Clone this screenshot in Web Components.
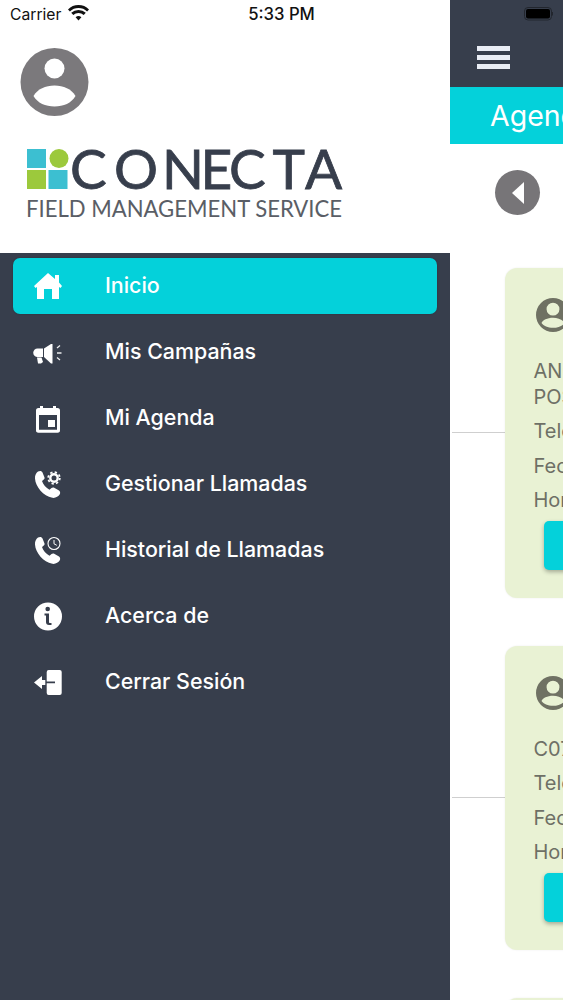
<!DOCTYPE html>
<html><head><meta charset="utf-8"><style>
html,body{margin:0;padding:0;background:#fff}
body{width:563px;height:1000px;overflow:hidden;font-family:Inter,"Liberation Sans",sans-serif}
</style></head><body>
<app-shell>
<side-drawer>
  <nav-item label="Inicio" icon="home" active></nav-item>
  <nav-item label="Mis Campañas" icon="mega"></nav-item>
  <nav-item label="Mi Agenda" icon="cal"></nav-item>
  <nav-item label="Gestionar Llamadas" icon="gear"></nav-item>
  <nav-item label="Historial de Llamadas" icon="clock"></nav-item>
  <nav-item label="Acerca de" icon="info"></nav-item>
  <nav-item label="Cerrar Sesión" icon="exit"></nav-item>
</side-drawer>
<agenda-panel>
  <agenda-card h="330"><span>ANGELICA MARIA<br>POSADA</span><span>Teléfono</span><span>Fecha</span><span>Hora</span></agenda-card>
  <agenda-card h="304" gap="48"><span>C0752</span><span>Teléfono</span><span>Fecha</span><span>Hora</span></agenda-card>
  <agenda-card h="304" gap="48"><span>C0752</span><span>Teléfono</span><span>Fecha</span><span>Hora</span></agenda-card>
</agenda-panel>
<status-bar></status-bar>
</app-shell>
<script>
const def=(n,html)=>{customElements.define(n,class extends HTMLElement{connectedCallback(){if(this.shadowRoot)return;const s=this.attachShadow({mode:'open'});s.innerHTML=typeof html==='function'?html(this):html;}})};

def('app-shell',`<style>:host{display:flex;width:563px;height:1000px;position:relative;overflow:hidden}</style><slot></slot>`);

def('status-bar',`<style>
:host{position:absolute;left:0;top:0;width:563px;height:30px;display:block;font:500 15px/29px Inter,sans-serif;color:#111}
.c{position:absolute;left:10px;top:0;font-weight:400;font-size:15.700px}
.t{position:absolute;left:0;right:0;top:0;text-align:center;font-size:16.700px;font-weight:500}
svg{position:absolute}
</style>
<span class="c">Carrier</span>
<svg style="left:68px;top:5px" width="21" height="16" viewBox="0 0 21 16"><path d="M10.5 15.5 7.6 12.3a4.2 4.2 0 0 1 5.8 0zM5.3 10 3.2 7.8a10.6 10.6 0 0 1 14.6 0L15.7 10a7.6 7.6 0 0 0-10.4 0zM1.9 6.4 0 4.4a15 15 0 0 1 21 0l-1.9 2a12.4 12.4 0 0 0-17.2 0z" fill="#111"/></svg>
<span class="t">5:33 PM</span>
<svg style="left:524px;top:7px" width="29" height="14" viewBox="0 0 29 14"><rect x=".5" y=".5" width="27" height="12.5" rx="3.5" fill="none" stroke="#22262e"/><rect x="2" y="2" width="24" height="9.5" rx="2" fill="#000"/><rect x="28" y="5" width="1" height="3.5" fill="#22262e"/></svg>`);

def('side-drawer',`<style>
:host{display:flex;flex-direction:column;width:450px;flex:none;height:1000px;background:#373e4c}
.head{height:253px;background:#fff;box-sizing:border-box;padding:48px 0 0 20px;flex:none}
.av{display:block;width:69px;height:68px}
.logo{display:block;margin:33px 0 0 7px;overflow:visible}
.list{display:flex;flex-direction:column}
</style>
<div class="head">
<svg class="av" viewBox="0 0 68 68"><circle cx="34" cy="34" r="34" fill="#7b797c"/><circle cx="34" cy="20.500" r="10" fill="#fff"/><path d="M13 48C17 41 25 37.500 34 37.500S51 41 55 48C51 55 43 58.500 34 58.500S17 55 13 48z" fill="#fff"/></svg>
<svg class="logo" width="320" height="72" viewBox="0 0 320 72">
<rect x="0" y="0" width="19" height="19" fill="#3cbfd1"/><circle cx="32" cy="9.500" r="9.500" fill="#9cc93c"/><rect x="0" y="21" width="19" height="19" fill="#9cc93c"/><rect x="21.500" y="21" width="19" height="19" fill="#3cbfd1"/>
<text y="39.500" x="43 87 135 173.500 202 245.500 278" font-family="Lato,sans-serif" font-size="55" stroke="#373e4c" stroke-width=".8" fill="#373e4c">CONECTA</text>
<text x="-1" y="67.500" font-family="Lato,sans-serif" font-size="23.500" fill="#5a5e66" textLength="316" lengthAdjust="spacingAndGlyphs">FIELD MANAGEMENT SERVICE</text>
</svg>
</div>
<div class="list"><slot></slot></div>`);

const phone=`<path d="M5 2.500C7 1.500 9 2 9.500 3.500L11.500 8.500C11.800 9.500 11.300 10.200 10.500 10.800L9 12C10 15.500 13 19 16.500 20.700L18.500 19C19.300 18.300 20.300 18.200 21.200 18.700L26 21.500C27.200 22.300 27.500 24 26.800 25.300 25.300 27.800 22.300 29.300 19.300 28.800 10.500 27 2.500 18 2 9.500 1.800 6.500 3 4 5 2.500z"/>`;
const icons={
home:`<path d="M15 2 22 8V4H26V11.500L29 15 27.500 17 26 16V28H19V18H11V28H4V16L2.500 17 1 15z"/>`,
mega:`<path d="M4.500 11.500H10V20H4.500A4.250 4.250 0 0 1 4.500 11.500z"/><path d="M11 11.500 18 7H19.500V26.500H18L11 20z"/><path d="M4 20.500H8.500L10 25 8 26.500H5z"/><g fill="none" stroke="currentColor" stroke-width="1.300" opacity=".9"><path d="M24 11 27 8.500M24 16H28.500M24 20.500 27 23"/></g>`,
cal:`<path fill-rule="evenodd" d="M7 3H10V5H20V3H23V5H24.500A2.500 2.500 0 0 1 27 7.500V27A2.500 2.500 0 0 1 24.500 29.700H5.500A2.500 2.500 0 0 1 3 27V7.500A2.500 2.500 0 0 1 5.500 5H7zM6 12V26.700H24V12z"/><rect x="15" y="17" width="7" height="7"/>`,
gear:phone+`<g fill="none" stroke="currentColor"><circle cx="21" cy="9" r="3.700" stroke-width="2.400"/><circle cx="21" cy="9" r="5.800" stroke-width="1.800" stroke-dasharray="2.300 2.255"/></g>`,
clock:phone+`<g fill="none" stroke="currentColor"><circle cx="21" cy="8.500" r="6" stroke-width="1.100"/><path d="M21 5V8.800L23.800 10.300" stroke-width="1"/></g>`,
info:`<path fill-rule="evenodd" d="M15 1.500a14 14 0 1 1 0 28 14 14 0 0 1 0-28zM14.700 5.700a2.300 2.300 0 1 0 0 4.600 2.300 2.300 0 0 0 0-4.600zM11.500 12.500V14.500H13V21C13 22.800 14 24 16 24H18.500V22H17C16.300 22 16 21.600 16 21V12.500z"/>`,
exit:`<path d="M15.700 3H26.700A2 2 0 0 1 28.700 5V26A2 2 0 0 1 26.700 28H15.700A2 2 0 0 1 13.700 26V16.300H22V14.600H13.700V5A2 2 0 0 1 15.700 3z"/><path d="M1 15.500 9 9V13H12.300V18H9V22z"/>`
};
def('nav-item',e=>{const a=e.hasAttribute('active');return `<style>
:host{display:flex;align-items:center;height:66px;flex:none}
.in{display:flex;align-items:center;margin:0 13px;flex:1;height:${a?56:66}px;background:${a?'#04d1da':'transparent'};border-radius:7px;box-shadow:${a?'0 0 2px rgba(0,0,0,.25)':'none'};color:#fff}
svg{width:30px;height:30px;margin-left:20px;flex:none;fill:currentColor}
span{margin-left:42px;font:500 21.400px/1 Inter,sans-serif;white-space:nowrap}
</style><div class="in"><svg viewBox="0 0 30 30">${icons[e.getAttribute('icon')]}</svg><span>${e.getAttribute('label')}</span></div>`});

def('agenda-panel',`<style>
:host{display:flex;flex-direction:column;flex:none;width:113px;height:1000px;overflow:hidden;background:#fff}
.wrap{width:420px;flex:none;display:flex;flex-direction:column}
.top{height:87px;background:#373e4c;flex:none;box-sizing:border-box;padding:46px 0 0 27px}
.bars{display:flex;flex-direction:column;gap:4.500px;width:33px}
.bars i{display:block;height:4.500px;background:#e9edf5}
.title{height:57px;background:#04d1da;color:#fff;font:400 28.500px/57px Inter,sans-serif;padding-left:40px;flex:none}
.nav{height:124px;flex:none;box-sizing:border-box;padding:26px 0 0 45px}
.back{display:flex;align-items:center;justify-content:center;width:45px;height:45px;border-radius:50%;background:#777578}
</style><div class="wrap">
<div class="top"><div class="bars"><i></i><i></i><i></i></div></div>
<div class="title">Agenda</div>
<div class="nav"><div class="back"><svg width="14" height="22" viewBox="0 0 14 22"><path d="M13 0v22L1 11z" fill="#fff"/></svg></div></div>
<slot></slot>
</div>`);

def('agenda-card',e=>`<style>
:host{display:flex;align-items:center;flex:none;margin-top:${e.getAttribute('gap')||0}px;height:${e.getAttribute('h')}px}
.l{width:53px;height:1px;background:#cfcfcf;margin:0 0 2px 2px;flex:none}
.c{width:340px;height:100%;box-sizing:border-box;background:#e9f2d4;border-radius:12px;padding:30px 0 0 29px;box-shadow:0 0 2px rgba(0,0,0,.08)}
svg{display:block;width:34px;height:34px;margin-left:2px}
.tx{display:flex;flex-direction:column;gap:8.600px;font:400 20px/26px Inter,sans-serif;color:#6e7066;margin:25.500px 0 0 -.5px}
::slotted(span){display:block;white-space:nowrap}
.b{margin:7.500px 0 0 10px;width:200px;height:49px;border-radius:5px;background:#04d1da;box-shadow:0 2px 4px rgba(0,0,0,.3)}
</style><div class="l"></div><div class="c">
<svg viewBox="0 0 36 36"><path fill="#6f7163" fill-rule="evenodd" d="M18 0a18 18 0 1 1 0 36 18 18 0 0 1 0-36zM18 5a6.800 6.800 0 1 0 0 13.600 6.800 6.800 0 0 0 0-13.600zM18 21C12 21 7 23.500 5.800 26.500 8 29.500 12.500 31.500 18 31.500S28 29.500 30.200 26.500C29 23.500 24 21 18 21z"/></svg>
<div class="tx"><slot></slot></div><div class="b"></div></div>`);
</script>
</body></html>
